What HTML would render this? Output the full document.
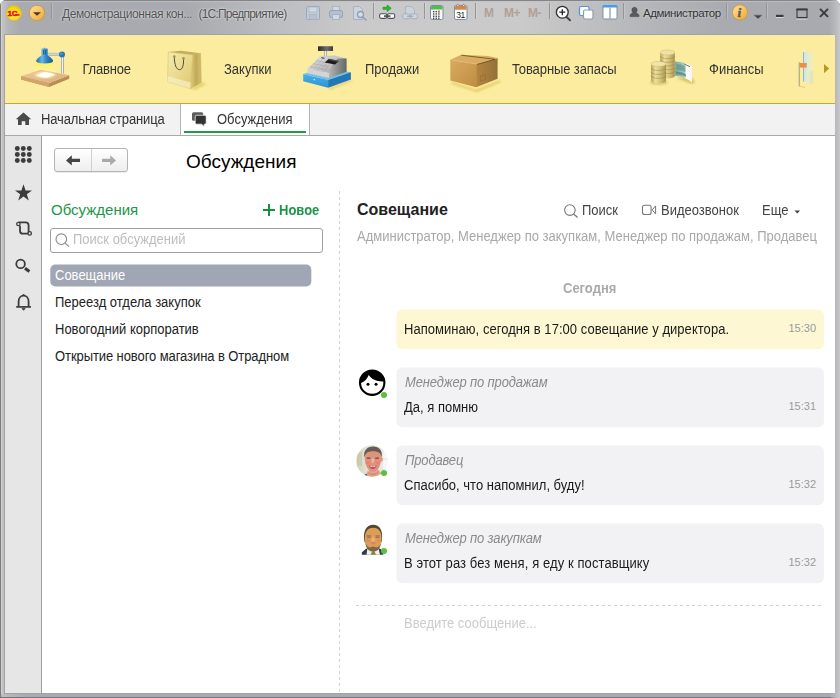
<!DOCTYPE html>
<html lang="ru">
<head>
<meta charset="utf-8">
<title>Обсуждения</title>
<style>
*{box-sizing:border-box;margin:0;padding:0}
html,body{width:840px;height:698px;overflow:hidden;background:#fff}
body{font-family:"Liberation Sans",Arial,sans-serif;font-size:13px;color:#222;position:relative}
.abs{position:absolute}
#win{position:absolute;left:0;top:0;width:840px;height:698px;border-radius:6px 6px 0 0;overflow:hidden;
 background:linear-gradient(90deg,#a9abb0 0,#a8aaaf 22%,#bcbdc0 33%,#c9c9ca 42%,#cacaca 62%,#b6b7ba 76%,#a9abb0 86%,#a8aaaf 100%)}
#win:before{content:"";position:absolute;left:0;top:0;width:22px;height:698px;background:linear-gradient(90deg,#c4c4c4 0,#c0c0c0 4px,rgba(184,185,188,.7) 8px,rgba(169,171,176,0) 20px)}
#win:after{content:"";position:absolute;right:0;top:0;width:12px;height:698px;background:linear-gradient(270deg,#c8c8c8 0,#bcbdc0 3px,rgba(169,171,176,0) 11px)}
.fr{position:absolute;background:#7c7c7e}
#titletxt,#titletxt2{left:62px;top:6px;font-size:12px;letter-spacing:-.43px;color:#505050;white-space:nowrap;line-height:16px;text-shadow:0 0 3px rgba(255,255,255,.75),0 0 1px rgba(255,255,255,.5)}
#titletxt2{left:198.5px;letter-spacing:-.8px}
#sections{left:5px;top:35px;width:830px;height:68px;background:#fcec9f}
#secline{left:5px;top:103px;width:830px;height:1px;background:#c9aa22}
.sec{position:absolute;top:27px;font-size:13px;color:#333;white-space:nowrap;line-height:16px}
#tabs{left:5px;top:104px;width:830px;height:31px;background:#f2f2f2}
#tabs2{left:5px;top:104px;width:830px;height:31px}
#tabline{left:5px;top:135px;width:830px;height:1px;background:#a9a9a9}
.tab{position:absolute;z-index:2;top:8px;font-size:13px;color:#333;white-space:nowrap;line-height:16px}
#tools{left:5px;top:136px;width:36px;height:557px;background:#e6e6e6}
#toolline{left:41px;top:136px;width:1px;height:557px;background:#a0a0a0}
#main{left:42px;top:136px;width:793px;height:557px;background:#fff}

#main .t{position:absolute;white-space:nowrap;line-height:16px}
#nav{left:54px;top:148px;width:74px;height:24px;border:1px solid #b4b4b4;border-radius:3px;background:linear-gradient(#fff,#eee);box-shadow:0 1px 0 rgba(0,0,0,.08)}
#nav i{position:absolute;left:36px;top:0;width:1px;height:22px;background:#cfcfcf}
#ptitle{left:186px;top:151px;font-size:19px;line-height:22px;color:#000;white-space:nowrap}
#ltitle{left:51px;top:201px;font-size:15px;line-height:18px;color:#1d9549;white-space:nowrap}
#lnew{left:279px;top:203px;font-size:13px;line-height:16px;font-weight:bold;color:#1d9549;white-space:nowrap}
#search{left:50px;top:228px;width:273px;height:25px;border:1px solid #a0a0a0;border-radius:3px;background:#fff}
#search span{position:absolute;left:22px;top:3px;font-size:13px;line-height:16px;color:#bdbdbd;white-space:nowrap}
.row{position:absolute;left:55px;font-size:13px;line-height:16px;color:#222;white-space:nowrap}
#sel{left:50px;top:264px;width:261px;height:22px;border-radius:5px;background:#a0a6b3;transform:translate(.3px,.5px)}
#vdash{left:339px;top:191px;width:1px;height:502px;background:repeating-linear-gradient(180deg,#d2d2d2 0,#d2d2d2 3px,transparent 3px,transparent 6px)}
#ctitle{left:357px;top:201px;font-size:16px;line-height:18px;font-weight:bold;color:#222;white-space:nowrap}
.hb{position:absolute;top:203px;font-size:13px;line-height:16px;color:#444;white-space:nowrap}
#parts{left:357px;top:229px;font-size:13px;line-height:16px;color:#a8a8a8;white-space:nowrap}
#today{left:563px;top:281px;font-size:13px;line-height:16px;font-weight:bold;color:#aaa;white-space:nowrap}
.bub{position:absolute;left:396px;width:428px}
.bub .au{position:absolute;left:9px;top:8px;font-size:13px;line-height:16px;font-style:italic;color:#8a8a8a;white-space:nowrap;letter-spacing:-.16px}
.bub .tx{position:absolute;left:8px;font-size:13px;line-height:16px;color:#1a1a1a;white-space:nowrap}
.bub .tm{position:absolute;right:8px;font-size:11px;line-height:14px;color:#9a9a9a;white-space:nowrap}
#hdash{left:356px;top:605px;width:465px;height:1px;background:repeating-linear-gradient(90deg,#d0d0d0 0,#d0d0d0 3px,transparent 3px,transparent 6px)}
#inp{left:404px;top:616px;font-size:13px;line-height:16px;color:#ccc;white-space:nowrap}
.av{position:absolute;width:27px;height:27px;border-radius:50%;overflow:hidden}
.dot{position:absolute;width:7px;height:7px;border-radius:50%;background:#5cc04a;border:1px solid #fff}

.tsep{position:absolute;top:3px;width:2px;height:16px;border-left:1px solid #93959b;border-right:1px solid rgba(255,255,255,.18)}
.ti{position:absolute;overflow:visible}
.mm{position:absolute;top:5px;font-size:12px;line-height:16px;font-weight:bold;color:#b3a094;letter-spacing:-.5px;white-space:nowrap}
#admin{left:643px;top:5px;font-size:11.5px;letter-spacing:-.4px;color:#333;white-space:nowrap;line-height:16px;text-shadow:0 0 3px rgba(255,255,255,.6)}

#atab{left:181px;top:104px;width:128px;height:31px;background:#fff}
.tabsep{position:absolute;top:104px;width:1px;height:31px;background:#b4b4b4}
#tabul{left:184px;top:131px;width:122px;height:2px;background:#1d9b48}
.sec,.tab,.row,.hb,#parts,#today,.bub .au,.bub .tx,#inp,#search span,#lnew{transform:scaleY(1.07);transform-origin:0 12.5px}
.row{transform:translateY(.5px) scaleY(1.07)}
</style>
</head>
<body>
<div id="win">
<div class="fr" style="left:0;top:0;width:1px;height:698px"></div>
<div class="fr" style="left:839px;top:0;width:1px;height:698px;background:#727274"></div>
<div class="fr" style="left:0;top:0;width:840px;height:1px;background:#848486"></div>
<div class="fr" style="left:1px;top:1px;width:838px;height:1px;background:#c2c3c6;opacity:.8"></div>
<div class="fr" style="left:1px;top:1px;width:1px;height:696px;background:#d0d0d0"></div>
<div class="fr" style="left:838px;top:1px;width:1px;height:696px;background:#d0d0d0"></div>
<div class="fr" style="left:1px;top:694px;width:838px;height:3px;background:linear-gradient(90deg,#bcbcbe 0,#a9abb0 3%,#a9abb0 100%)"></div>
<div class="fr" style="left:0;top:697px;width:840px;height:1px;background:#77777a"></div>
<div class="fr" style="left:4px;top:34px;width:832px;height:660px;background:#a0a2a9"></div>
</div>
<div id="titletxt" class="abs">Демонстрационная кон...</div>
<div id="titletxt2" class="abs">(1С:Предприятие)</div>

<svg class="ti" style="left:0;top:0" width="840" height="35" viewBox="0 0 840 35">
<defs>
<radialGradient id="g1c" cx=".45" cy=".6" r=".6"><stop offset="0" stop-color="#fff24a"/><stop offset=".7" stop-color="#fbd914"/><stop offset="1" stop-color="#e9bd10"/></radialGradient>
<linearGradient id="gor" x1="0" y1="0" x2="1" y2="1"><stop offset="0" stop-color="#fde0a0"/><stop offset=".5" stop-color="#f9c468"/><stop offset="1" stop-color="#f1a436"/></linearGradient>
</defs>
<circle cx="14" cy="13" r="7.6" fill="url(#g1c)" stroke="#d9b83a" stroke-width=".6"/>
<text x="7.6" y="15.7" font-family="Liberation Sans,Arial,sans-serif" font-weight="bold" font-size="8" fill="#e0101a" stroke="#e0101a" stroke-width=".5" letter-spacing="-.3">1С</text>
<path d="M14.600 14.900h5" stroke="#e0101a" stroke-width="1.500"/>
<circle cx="37" cy="13" r="7.7" fill="url(#gor)" stroke="#c9993f" stroke-width=".9"/>
<path d="M33 12.2h8l-4 3.6z" fill="#4a3a22"/>
</svg>

<svg class="ti" style="left:300px;top:0" width="130" height="35" viewBox="300 0 130 35">
<!-- save (disabled) -->
<g opacity=".9">
<rect x="306.5" y="6.5" width="13" height="13" rx="1" fill="#c3ccd8" stroke="#93a7c0"/>
<rect x="309" y="7" width="8" height="5" fill="#d5dbe3" stroke="#9db0c6" stroke-width=".6"/>
<rect x="309.5" y="14.5" width="7" height="5" fill="#b7c3cf" stroke="#9db0c6" stroke-width=".6"/>
</g>
<!-- print (disabled) -->
<g opacity=".92">
<rect x="332.5" y="6.500" width="7" height="5" fill="#d4dae2" stroke="#9badc3" stroke-width=".8"/>
<rect x="329.500" y="10.500" width="13" height="7" rx="1.500" fill="#b4bfcd" stroke="#8fa2ba"/>
<rect x="332.500" y="14.500" width="7" height="5" fill="#d4dae2" stroke="#9badc3" stroke-width=".8"/>
</g>
<!-- preview (disabled) -->
<g opacity=".92">
<path d="M353.500 6.500h6l3 3v10h-9z" fill="#cdd5de" stroke="#9badc3" stroke-width=".9"/>
<circle cx="360.500" cy="14.500" r="3" fill="#d9dfe6" stroke="#8a9db5" stroke-width="1.300"/>
<path d="M363 17l3 3" stroke="#8a9db5" stroke-width="1.600" stroke-linecap="round"/>
</g>
<!-- link with green arrow -->
<path d="M383 7.300h4.200v-2.300l4 3.300-4 3.300v-2.300h-4.200z" fill="#22c322" stroke="#168a16" stroke-width=".6"/>
<rect x="379.600" y="13.800" width="7.300" height="4.600" rx="1.600" fill="#fff" stroke="#4a4f58" stroke-width="1.100"/>
<rect x="387.400" y="13.800" width="7.300" height="4.600" rx="1.600" fill="#fff" stroke="#4a4f58" stroke-width="1.100"/>
<rect x="384" y="15.300" width="6.500" height="1.600" fill="#4a4f58"/>
<!-- disabled link/doc -->
<g opacity=".75">
<path d="M405.500 6.500h6l3 3v6h-9z" fill="#cfd6df" stroke="#9badc3" stroke-width=".9"/>
<rect x="402.800" y="13.800" width="7" height="5" rx="1.600" fill="#d4dae2" stroke="#95a7be" stroke-width="1"/>
<rect x="410.400" y="13.800" width="7" height="5" rx="1.600" fill="#d4dae2" stroke="#95a7be" stroke-width="1"/>
<rect x="407" y="15.500" width="6.500" height="1.500" fill="#95a7be"/>
</g>
</svg>
<svg class="ti" style="left:426px;top:0" width="50" height="35" viewBox="426 0 50 35">
<!-- calculator -->
<rect x="430.500" y="5.500" width="12.500" height="14" rx="1.500" fill="#f4f6f8" stroke="#7f8fa3"/>
<path d="M431 7.200q0-1.200 1.200-1.200h9.100q1.200 0 1.200 1.200v2.300h-11.500z" fill="#4cc04c"/>
<g fill="#333"><rect x="433" y="11" width="1.300" height="1.300"/><rect x="435.600" y="11" width="1.300" height="1.300"/><rect x="433" y="13.300" width="1.300" height="1.300"/><rect x="435.600" y="13.300" width="1.300" height="1.300"/><rect x="438.200" y="13.300" width="1.300" height="1.300"/><rect x="433" y="15.600" width="1.300" height="1.300"/><rect x="435.600" y="15.600" width="1.300" height="1.300"/><rect x="438.200" y="15.600" width="1.300" height="1.300"/><rect x="433" y="17.600" width="1.300" height="1.300"/><rect x="435.600" y="17.600" width="1.300" height="1.300"/><rect x="438.200" y="17.600" width="1.300" height="1.300"/></g>
<rect x="438.200" y="10.600" width="1.400" height="2" fill="#e02020"/>
<!-- calendar -->
<rect x="454.500" y="5.500" width="12.500" height="14" rx="1.500" fill="#fff" stroke="#7f8fa3"/>
<path d="M455 7.200q0-1.200 1.200-1.200h9.100q1.200 0 1.200 1.200v2.600h-11.500z" fill="#cf8a55"/>
<rect x="457" y="4.300" width="1.300" height="2.600" fill="#fff" stroke="#b07040" stroke-width=".4"/><rect x="463" y="4.300" width="1.300" height="2.600" fill="#fff" stroke="#b07040" stroke-width=".4"/>
<text x="456.200" y="18" font-family="Liberation Sans,Arial,sans-serif" font-size="8.500" fill="#222" letter-spacing="-.5">31</text>
</svg>
<svg class="ti" style="left:552px;top:0" width="90" height="35" viewBox="552 0 90 35">
<!-- zoom -->
<path d="M566 16.500l4 3.800" stroke="#444" stroke-width="2" stroke-linecap="round"/>
<circle cx="562.300" cy="12.200" r="5.900" fill="#fff" stroke="#2e2e2e" stroke-width="1.300"/>
<path d="M559.300 12.200h6M562.300 9.200v6" stroke="#222" stroke-width="1.300"/>
<!-- windows -->
<rect x="579.500" y="6.500" width="9.500" height="9" rx="1.500" fill="#fff" stroke="#4d95dd" stroke-width="1.200"/>
<rect x="583.500" y="10" width="9.500" height="9" rx="1.500" fill="#fff" stroke="#8c9bb0" stroke-width="1.200"/>
<!-- panels -->
<rect x="603" y="5.500" width="14" height="13.500" rx="1.200" fill="#fff" stroke="#7f8fa8" stroke-width="1"/>
<path d="M602.500 7q0-2 2-2h11q2 0 2 2v.6h-15z" fill="#4d9be8"/>
<path d="M610 7.600v11" stroke="#6f7f98" stroke-width="1"/>
<!-- user -->
<path d="M634.500 7.300c1.700 0 2.600 1.200 2.600 2.700 0 1-.4 1.900-1 2.500.2.800 2.900 1.300 2.900 3.100v1h-9v-1c0-1.800 2.700-2.300 2.900-3.100-.6-.6-1-1.500-1-2.500 0-1.500.9-2.700 2.600-2.700z" fill="#5a5a5a" stroke="#3c3c3c" stroke-width=".5"/>
</svg>
<svg class="ti" style="left:728px;top:0" width="110" height="35" viewBox="728 0 110 35">
<circle cx="740" cy="12.400" r="7.600" fill="url(#gor)" stroke="#c9993f" stroke-width=".9"/>
<text x="737.600" y="17" font-family="Liberation Serif,serif" font-style="italic" font-weight="bold" font-size="13.5" fill="#5a5a5a" stroke="#5a5a5a" stroke-width=".4">i</text>
<path d="M754 15.200h8l-4 3.600z" fill="#444"/>
<path d="M754 15.200h8" stroke="#666" stroke-width=".6"/>
<rect x="776" y="17" width="7.500" height="1" fill="#d8d8d8"/>
<rect x="776" y="14.800" width="7.500" height="2.200" fill="#3a3a3a"/>
<rect x="796.500" y="19" width="11" height="1" fill="#d0d0d0" opacity=".7"/>
<rect x="797" y="9.500" width="10" height="8" fill="none" stroke="#3a3a3a" stroke-width="1.100"/>
<rect x="796.500" y="8.400" width="11" height="2" fill="#3a3a3a"/>
<path d="M820 8.800l8 8M828 8.800l-8 8" stroke="#3a3a3a" stroke-width="1.900"/>
</svg>
<div class="tsep" style="left:51px"></div>
<div class="tsep" style="left:373px"></div>
<div class="tsep" style="left:424px"></div>
<div class="tsep" style="left:475px"></div>
<div class="tsep" style="left:549px"></div>
<div class="tsep" style="left:623px"></div>
<div class="tsep" style="left:726px"></div>
<div class="tsep" style="left:766px"></div>
<div class="mm" style="left:484px">M</div>
<div class="mm" style="left:504px">M+</div>
<div class="mm" style="left:528px">M-</div>
<div id="admin" class="abs">Администратор</div>
<div id="sections" class="abs">
 <div class="sec" style="left:77.500px;letter-spacing:-.2px">Главное</div>
 <div class="sec" style="left:219px">Закупки</div>
 <div class="sec" style="left:360px">Продажи</div>
 <div class="sec" style="left:507px;letter-spacing:-.1px">Товарные запасы</div>
 <div class="sec" style="left:704px">Финансы</div>
</div>

<svg class="ti" style="left:5px;top:35px" width="830" height="68" viewBox="5 35 830 68">
<defs>
<linearGradient id="lsh" x1="0" y1="0" x2="1" y2="0"><stop offset="0" stop-color="#1d6aa8"/><stop offset=".35" stop-color="#6bb6e6"/><stop offset=".6" stop-color="#2f86c4"/><stop offset="1" stop-color="#165a94"/></linearGradient>
<linearGradient id="lglow" x1="0" y1="0" x2="0" y2="1"><stop offset="0" stop-color="#fff25a"/><stop offset="1" stop-color="#fff7a8" stop-opacity=".55"/></linearGradient>
<linearGradient id="lpole" x1="0" y1="0" x2="1" y2="0"><stop offset="0" stop-color="#8c8c8c"/><stop offset=".45" stop-color="#f2f2f2"/><stop offset="1" stop-color="#8a8a8a"/></linearGradient>
<linearGradient id="larm" x1="0" y1="0" x2="0" y2="1"><stop offset="0" stop-color="#9a9a9a"/><stop offset=".45" stop-color="#f0f0f0"/><stop offset="1" stop-color="#8a8a8a"/></linearGradient>
<linearGradient id="ldesk" x1="0" y1="0" x2="1" y2="1"><stop offset="0" stop-color="#efc9a0"/><stop offset="1" stop-color="#d8ae74"/></linearGradient>
<radialGradient id="lspot" cx=".5" cy=".5" r=".5"><stop offset="0" stop-color="#fffbe0"/><stop offset=".6" stop-color="#fbeeb0" stop-opacity=".8"/><stop offset="1" stop-color="#f0d090" stop-opacity="0"/></radialGradient>
<linearGradient id="bagf" x1="0" y1="0" x2="1" y2="1"><stop offset="0" stop-color="#f6eab0"/><stop offset=".6" stop-color="#e8d688"/><stop offset="1" stop-color="#dcc670"/></linearGradient>
<linearGradient id="bags" x1="0" y1="0" x2="1" y2="0"><stop offset="0" stop-color="#e2d088"/><stop offset=".45" stop-color="#c4ad5a"/><stop offset="1" stop-color="#d2bd70"/></linearGradient>
<linearGradient id="regb" x1="0" y1="0" x2="0" y2="1"><stop offset="0" stop-color="#49b2e8"/><stop offset="1" stop-color="#2a93d6"/></linearGradient>
<linearGradient id="regk" x1="0" y1="0" x2="1" y2="1"><stop offset="0" stop-color="#e8e8e8"/><stop offset="1" stop-color="#a8a8a8"/></linearGradient>
<linearGradient id="regs" x1="0" y1="0" x2="1" y2="0"><stop offset="0" stop-color="#b4b4b4"/><stop offset="1" stop-color="#666"/></linearGradient>
<linearGradient id="regd" x1="0" y1="0" x2="1" y2="0"><stop offset="0" stop-color="#2a2a2a"/><stop offset=".6" stop-color="#707070"/><stop offset="1" stop-color="#3a3a3a"/></linearGradient>
<linearGradient id="boxf" x1="0" y1="0" x2="1" y2="1"><stop offset="0" stop-color="#d7ab60"/><stop offset="1" stop-color="#c08d42"/></linearGradient>
<linearGradient id="boxr" x1="0" y1="0" x2="1" y2="0"><stop offset="0" stop-color="#b5853f"/><stop offset="1" stop-color="#94703a"/></linearGradient>
<linearGradient id="coin" x1="0" y1="0" x2="1" y2="0"><stop offset="0" stop-color="#b8a458"/><stop offset=".3" stop-color="#ebdfa2"/><stop offset=".7" stop-color="#cdbb72"/><stop offset="1" stop-color="#a8944e"/></linearGradient>
<linearGradient id="note" x1="0" y1="0" x2="1" y2="0"><stop offset="0" stop-color="#7fa9a0"/><stop offset=".55" stop-color="#a9cdbf"/><stop offset=".66" stop-color="#ffffff"/><stop offset="1" stop-color="#f4f4f4"/></linearGradient>
<linearGradient id="docf" x1="0" y1="0" x2="1" y2="0"><stop offset="0" stop-color="#5d9fd0"/><stop offset=".12" stop-color="#cfe6e4"/><stop offset=".6" stop-color="#e0efd8" stop-opacity=".8"/><stop offset="1" stop-color="#f4ecb0" stop-opacity="0"/></linearGradient>
<linearGradient id="docg" x1="0" y1="0" x2="1" y2="0"><stop offset="0" stop-color="#f4ecc8"/><stop offset=".7" stop-color="#d4e2b8" stop-opacity=".7"/><stop offset="1" stop-color="#f4ecb0" stop-opacity="0"/></linearGradient>
<filter id="blur1"><feGaussianBlur stdDeviation="1.2"/></filter>
</defs>
<!-- lamp -->
<g>
<path d="M36 62.800h16.800l3.500 9.500h-23.700z" fill="url(#lglow)"/>
<path d="M21.200 76.100l28 7 20-7.800v3.400l-20 8.200-28-7.300z" fill="#b98c58"/>
<path d="M21.200 76.100l27.800 6.900v3.900l-27.800-7.300z" fill="#d2a46c"/>
<path d="M21.200 76.100l19.600-6.400 28.400 5.600-20.200 7.700z" fill="url(#ldesk)"/>
<ellipse cx="45" cy="75" rx="13" ry="4.500" fill="url(#lspot)"/>
<path d="M36 75.700l8.200-3.900 11.200 2.600-8.600 3.400z" fill="#fff"/>
<rect x="61.300" y="56" width="2.700" height="17.600" fill="url(#lpole)"/>
<rect x="47" y="52.900" width="14" height="2.600" fill="url(#larm)"/>
<circle cx="62" cy="54.600" r="3" fill="#2878b4"/><circle cx="61.300" cy="53.800" r="1.300" fill="#5aa6dc" opacity=".7"/>
<path d="M44.300 47.200l.8 1.200h2q.6 0 .6.600v6.400q4.600 2.600 5.400 5.400 0 2.600-8.500 2.600t-8.500-2.600q.8-2.800 5.400-5.400v-6.400q0-.6.600-.6h1.600z" fill="url(#lsh)"/>
<path d="M43.600 50v4.500M45.400 50v4.500" stroke="#124c80" stroke-width=".8"/>
</g>
<!-- bag -->
<g>
<path d="M190 88.500l11.500-6 5.500 1.500-12 6z" fill="#c9b040" opacity=".45" filter="url(#blur1)"/>
<path d="M168.300 52l12.500-1.200 19.800 2.500-7.800 1.700z" fill="#c4ae5a"/>
<path d="M192.800 55l7.800-1.700.8 29.300-11.100 6z" fill="url(#bags)" stroke="#c4ad58" stroke-width=".4"/>
<path d="M196.500 54.200l.6 30.600" stroke="#bda650" stroke-width=".6"/>
<path d="M168.300 52l24.500 3-2.500 33.600-22.800-6.900z" fill="url(#bagf)" stroke="#d2bd6a" stroke-width=".5"/>
<path d="M167.600 76.200l23.100 6.400-.4 6-22.800-6.900z" fill="#f7efc4" opacity=".75"/>
<path d="M174.300 57c.2 8 2 12.600 5.300 12.700 3 .1 4.200-5 3.900-11" fill="none" stroke="#3c3a2c" stroke-width=".9"/>
<circle cx="174.300" cy="56.600" r="1.300" fill="#a8983c"/><circle cx="183.500" cy="58.400" r="1.300" fill="#a8983c"/>
</g>
<!-- register -->
<g>
<path d="M328 88l23-8.500 2 1.500-23 9z" fill="#c9b040" opacity=".4" filter="url(#blur1)"/>
<rect x="318" y="46.200" width="15" height="4.900" rx=".4" fill="url(#regd)"/>
<rect x="324.300" y="51" width="2.700" height="5" fill="url(#lpole)"/>
<path d="M303.200 74l20-6 27.700 4.200-22.800 7.800z" fill="#6cc2ee"/>
<path d="M303.200 74l24.900 6v7.700l-24.900-6.400z" fill="url(#regb)"/>
<path d="M328.100 80l22.800-7.800v7.400l-22.800 8.100z" fill="#2277b6"/>
<circle cx="314.300" cy="79.600" r=".8" fill="#d8e8f0"/>
<path d="M320 56l15-.6 11.600 3.100-9 2z" fill="#c8c8c8"/>
<path d="M329 78v-5.500c1.400-6.500 4.400-11.100 8.600-13.900l9-.1v13.300z" fill="url(#regs)"/>
<path d="M307.500 68.700l21.500 3.800v5.500l-21.500-4.800z" fill="#d4d4d4"/>
<path d="M307.500 68.700l12.500-12.700 17.600 2.600c-4.200 2.800-7.200 7.400-8.600 13.900z" fill="url(#regk)"/>
<path d="M311 67.500l8-8.500M314.500 68.200l7.500-8.700M318 68.900l6.500-8M321.500 69.500l5-6M325 70.200l3-3.500M313.500 63.800l14 2.600M316.500 60.800l9 1.700M310.500 66.800l16 3" stroke="#9a9a9a" stroke-width=".5" opacity=".8"/>
<path d="M324.700 62.500l4.300-3.800 9.900 2.300-3.900 3.500z" fill="#1c1c1c"/>
<path d="M329 58.700l9.900 2.300-1.200 1.100-9.600-2.400z" fill="#555"/>
<rect x="321.300" y="57.400" width="3.200" height=".9" fill="#333" transform="rotate(8 322 58)"/>
</g>
<!-- box -->
<g>
<path d="M452 82l24 7.500 23-9 2 1.500-24 10-26-8z" fill="#c9ac38" opacity=".5" filter="url(#blur1)"/>
<path d="M450.300 59.800l10.800-5 27.100 1.100 9.400 2.200-21.500 6z" fill="#d9ae62"/>
<path d="M450.300 59.800l25.800 4.300v23.200l-25.800-6.900z" fill="url(#boxf)"/>
<path d="M476.100 64.100l21.500-6v20.600l-21.500 8.600z" fill="url(#boxr)"/>
<path d="M450.300 59.800l25.800 4.300 21.500-6" fill="none" stroke="#e6c486" stroke-width=".6" opacity=".8"/>
<path d="M480.300 76.400l5.200-1.700v4.600l-5.200 1.800z" fill="none" stroke="#8a6430" stroke-width=".5"/>
<path d="M461.300 55.200l33.700 4.100-17.800 5.100" fill="none" stroke="#5e401a" stroke-width=".9" opacity=".8"/>
</g>
<!-- coins + note -->
<g>
<path d="M676 78l16 6 3-1.500-4-6z" fill="#b09828" opacity=".5" filter="url(#blur1)"/>
<ellipse cx="659" cy="82.500" rx="9" ry="2.500" fill="#b09828" opacity=".4" filter="url(#blur1)"/>
<path d="M674.800 61.500c7 .2 13 2 17.200 5.200v15.900c-4.200-4-10-6.300-17.200-6.900z" fill="url(#note)"/>
<path d="M676.500 64c3.500.3 6.500 1 9 2.200v6c-2.500-1.300-5.500-2-9-2.300z" fill="#4f8c86" opacity=".55"/>
<path d="M676 71.500c3.800.3 7 1.100 10 2.600v2.800c-3-1.600-6.200-2.400-10-2.800z" fill="#3c7a74" opacity=".6"/>
<path d="M684.500 64.200l5.500 2.500" stroke="#333" stroke-width=".7"/>
<path d="M660.200 52.500v23.400a7.300 2.500 0 0 0 14.600 0v-23.400z" fill="url(#coin)"/>
<g fill="none" stroke="#85722f" stroke-width=".6" opacity=".65"><path d="M660.200 56.200a7.300 2.500 0 0 0 14.600 0M660.200 59.900a7.300 2.500 0 0 0 14.600 0M660.200 63.600a7.300 2.500 0 0 0 14.600 0M660.200 67.300a7.300 2.500 0 0 0 14.600 0M660.200 71a7.300 2.500 0 0 0 14.600 0"/></g>
<ellipse cx="667.500" cy="52.500" rx="7.300" ry="2.500" fill="#eee2a6" stroke="#cbb970" stroke-width=".5"/>
<path d="M651 64v16.900a7.500 2.600 0 0 0 15 0v-16.900z" fill="url(#coin)"/>
<g fill="none" stroke="#85722f" stroke-width=".6" opacity=".65"><path d="M651 67.900a7.500 2.600 0 0 0 15 0M651 71.800a7.500 2.600 0 0 0 15 0M651 75.700a7.500 2.600 0 0 0 15 0"/></g>
<ellipse cx="658.500" cy="64" rx="7.500" ry="2.600" fill="#f0e4a8" stroke="#cbb970" stroke-width=".5"/>
</g>
<!-- partial doc icon -->
<g>
<path d="M803 52.200l11.500-1.500v32l-11.500-1.200z" fill="url(#docf)"/>
<path d="M807.300 71.200l7-.5v13l-7-.5z" fill="url(#docg)"/>
<rect x="798.700" y="62.200" width="1" height="24" fill="#9a9a8a"/>
<rect x="799.700" y="63" width="7" height="4.600" fill="#f08c44"/>
<path d="M799 86l6 1.600" stroke="#c8b868" stroke-width=".8" opacity=".7"/>
</g>
<path d="M824 64l5.200 4.600-5.200 4.600z" fill="#b79a1a"/>
</svg>
<div id="secline" class="abs"></div>
<div id="tabs" class="abs"></div>
<div id="atab" class="abs"></div>
<div id="tabs2" class="abs">
 <div class="tab" style="left:36px;letter-spacing:-.12px">Начальная страница</div>
 <div class="tab" style="left:212px">Обсуждения</div>
</div>
<div class="tabsep" style="left:180px"></div><div class="tabsep" style="left:309px"></div>
<div id="tabul" class="abs"></div>
<svg class="ti" style="left:5px;top:104px" width="320" height="31" viewBox="5 104 320 31">
<path d="M23.500 112.600l7.700 6.700h-2.200v5.700h-3.700v-3.700h-3.600v3.700h-3.700v-5.700h-2.200z" fill="#4a4a4a"/>
<rect x="192" y="112.200" width="11.200" height="8.600" rx="1.600" fill="#5e5e5e"/>
<path d="M196.700 115.300h8q1.500 0 1.500 1.500v5.900q0 1.500-1.500 1.500h-.6l.4 2.600-3-2.600h-4.800q-1.500 0-1.500-1.500v-5.900q0-1.500 1.500-1.500z" fill="#333" stroke="#fff" stroke-width=".7"/>
</svg>
<div id="tabline" class="abs"></div>
<div id="tools" class="abs"></div>
<div id="toolline" class="abs"></div>
<div id="main" class="abs"></div>
<div id="nav" class="abs"><i></i></div>

<svg class="ti" style="left:5px;top:136px" width="130" height="200" viewBox="5 136 130 200">
<g fill="#3c3c3c">
<circle cx="17.300" cy="148.500" r="2.450"/><circle cx="23.300" cy="148.500" r="2.450"/><circle cx="29.300" cy="148.500" r="2.450"/>
<circle cx="17.300" cy="154.500" r="2.450"/><circle cx="23.300" cy="154.500" r="2.450"/><circle cx="29.300" cy="154.500" r="2.450"/>
<circle cx="17.300" cy="160.500" r="2.450"/><circle cx="23.300" cy="160.500" r="2.450"/><circle cx="29.300" cy="160.500" r="2.450"/>
<path d="M23.500 184.200l2.100 6.200h6.400l-5.200 3.800 2 6.200-5.300-3.900-5.300 3.900 2-6.200-5.200-3.800h6.400z"/>
</g>
<g fill="none" stroke="#3c3c3c" stroke-width="1.800">
<path d="M18.600 222.300h7q3 0 3 3v8"/>
<path d="M29.400 233.700h-6.600q-2.800 0-2.800-3v-5"/>
<circle cx="18.400" cy="224" r="1.700" fill="#e6e6e6" stroke-width="1.300"/>
<circle cx="29.700" cy="233.400" r="1.700" fill="#e6e6e6" stroke-width="1.300"/>
<circle cx="20.600" cy="263.900" r="4.300"/>
<path d="M25 268.200l4.400 3.300" stroke-width="3.200"/>
<path d="M18.600 306.500v-4.800c0-3.600 2.200-6 5-6s5 2.400 5 6v4.800" />
<path d="M16.200 306.900h14.800" stroke-width="1.700"/>
</g>
<path d="M22 308.400h3.200l-1.600 1.900z" fill="#3c3c3c" stroke="#3c3c3c" stroke-width=".8"/>
<circle cx="23.600" cy="294.900" r="1" fill="#3c3c3c"/>
<!-- nav arrows -->
<path d="M66 160.400l5.800-5.200v3.600h8.200v3.200h-8.200v3.600z" fill="#444"/>
<path d="M116 160.400l-5.800-5.200v3.600h-8.200v3.200h8.200v3.600z" fill="#aaa"/>
</svg>
<div id="ptitle" class="abs">Обсуждения</div>
<div id="ltitle" class="abs">Обсуждения</div>
<div id="lnew" class="abs">Новое</div>
<div id="search" class="abs"><span>Поиск обсуждений</span></div>
<div id="sel" class="abs"></div>
<div class="row" style="top:268px;color:#fff">Совещание</div>
<div class="row" style="top:295px">Переезд отдела закупок</div>
<div class="row" style="top:322px">Новогодний корпоратив</div>
<div class="row" style="top:349px;letter-spacing:-.085px">Открытие нового магазина в Отрадном</div>
<div id="vdash" class="abs"></div>
<div id="ctitle" class="abs">Совещание</div>
<div class="hb" style="left:582px">Поиск</div>
<div class="hb" style="left:661px">Видеозвонок</div>
<div class="hb" style="left:762px">Еще</div>
<div id="parts" class="abs">Администратор, Менеджер по закупкам, Менеджер по продажам, Продавец</div>
<div id="today" class="abs">Сегодня</div>
<svg class="ti" style="left:390px;top:300px" width="440" height="290" viewBox="390 300 440 290">
<rect x="396.400" y="309.400" width="427.500" height="39.800" rx="6" fill="#fdf7d4"/>
<rect x="396.400" y="367.400" width="427.500" height="59.900" rx="6" fill="#f2f2f4"/>
<rect x="396.400" y="445.400" width="427.500" height="59.900" rx="6" fill="#f2f2f4"/>
<rect x="396.400" y="523.400" width="427.500" height="59.900" rx="6" fill="#f2f2f4"/>
</svg>
<div class="bub" style="top:309px;height:40px"><span class="tx" style="top:13px;letter-spacing:.04px">Напоминаю, сегодня в 17:00 совещание у директора.</span><span class="tm" style="top:12px">15:30</span></div>
<div class="bub" style="top:367px;height:60px"><span class="au">Менеджер по продажам</span><span class="tx" style="top:33px">Да, я помню</span><span class="tm" style="top:32px">15:31</span></div>
<div class="bub" style="top:445px;height:60px"><span class="au">Продавец</span><span class="tx" style="top:33px">Спасибо, что напомнил, буду!</span><span class="tm" style="top:32px">15:32</span></div>
<div class="bub" style="top:523px;height:60px"><span class="au">Менеджер по закупкам</span><span class="tx" style="top:33px;letter-spacing:.09px">В этот раз без меня, я еду к поставщику</span><span class="tm" style="top:32px">15:32</span></div>

<svg class="ti" style="left:255px;top:195px" width="560" height="30" viewBox="255 195 560 30">
<path d="M263 210h12M269 204v12" stroke="#12923f" stroke-width="2"/>
<circle cx="569.900" cy="210.100" r="5.300" fill="none" stroke="#787878" stroke-width="1.100"/>
<path d="M573.700 214l3.900 3.500" stroke="#787878" stroke-width="1.200"/>
<rect x="642.500" y="205.300" width="8.600" height="9.200" rx="2" fill="none" stroke="#787878" stroke-width="1.100"/>
<path d="M652.200 209.900l3.400-4v8z" fill="none" stroke="#787878" stroke-width="1" stroke-linejoin="round"/>
<path d="M794.500 210.500h5.600l-2.800 2.900z" fill="#444"/>
</svg>
<svg class="ti" style="left:52px;top:230px" width="22" height="22" viewBox="52 230 22 22">
<circle cx="61.300" cy="239.200" r="5.300" fill="none" stroke="#8a8a8a" stroke-width="1.100"/>
<path d="M65.100 243.100l3.900 3.500" stroke="#8a8a8a" stroke-width="1.200"/>
</svg>
<svg class="ti" style="left:352px;top:362px" width="40" height="200" viewBox="352 362 40 200">
<defs>
<clipPath id="av1"><circle cx="372.200" cy="382.700" r="12.200"/></clipPath>
<clipPath id="av2"><circle cx="372" cy="461" r="15.700"/></clipPath>
<linearGradient id="av2bg" x1="0" y1="0" x2="1" y2="0"><stop offset="0" stop-color="#cfcfb4"/><stop offset=".35" stop-color="#e2e4d6"/><stop offset=".7" stop-color="#dfe6e0"/><stop offset="1" stop-color="#f2f4f2"/></linearGradient>
<filter id="bl"><feGaussianBlur stdDeviation=".7"/></filter>
<filter id="bl2"><feGaussianBlur stdDeviation=".5"/></filter>
</defs>
<!-- avatar 1 -->
<circle cx="372.200" cy="382.700" r="12.200" fill="#fff"/>
<g clip-path="url(#av1)">
<path d="M358 384c5.500-1 9-4.600 10.700-9 3.500 5 9.500 7.300 17.300 6.200v-14h-28z" fill="#000"/>
</g>
<circle cx="372.200" cy="382.700" r="12.200" fill="none" stroke="#000" stroke-width="2.100"/>
<circle cx="368" cy="384.200" r="1.500" fill="#000"/><circle cx="376" cy="384.200" r="1.500" fill="#000"/>
<circle cx="384" cy="395" r="3" fill="#5cbf3f"/>
<!-- avatar 2 -->
<g clip-path="url(#av2)">
<rect x="355" y="444" width="34" height="34" fill="url(#av2bg)"/>
<g filter="url(#bl)">
<rect x="383.300" y="449" width="4" height="9" fill="#f6f8f6" opacity=".9"/>
<rect x="383.300" y="460" width="4" height="9" fill="#f6f8f6" opacity=".9"/>
<rect x="357" y="452" width="5" height="14" fill="#c6c6a8" opacity=".7"/>
<path d="M365 478l2-5.500 3.500-3.500h6.500l4.500 4 2.500 5z" fill="#e8a488"/>
<path d="M361 478l3.500-3.500 3-1-1.500 4.500z" fill="#5e6670"/>
<ellipse cx="381.700" cy="459.500" rx="1.200" ry="2.200" fill="#e89c84"/>
<path d="M364.700 457c0-7 3.300-8.800 8.300-8.800s8.300 1.800 8.300 8.800c0 7-2.800 14.800-8.300 14.800s-8.300-7.800-8.300-14.800z" fill="#de947c"/>
<path d="M364.300 457.500c-1-7 2.500-11 8.700-11 6.400 0 9.800 4 8.700 11.200-.8-4.300-2.600-6.400-8.700-6.400-5.800 0-7.700 2-8.700 6.200z" fill="#665c52"/>
<ellipse cx="367.800" cy="462.800" rx="2.300" ry="1.900" fill="#ee7c7c" opacity=".75"/>
<ellipse cx="378" cy="462.800" rx="2.300" ry="1.900" fill="#ee7c7c" opacity=".75"/>
<ellipse cx="372.800" cy="460.500" rx="1.300" ry="2.200" fill="#f4c0a8" opacity=".8"/>
<path d="M368.800 465.200q4 1.800 8 0-1 3.800-4 3.800t-4-3.800z" fill="#c24c66"/>
<path d="M370 466q2.800.8 5.600 0l-.6 1.100h-4.400z" fill="#f4ecd0"/>
<path d="M366.800 458.200h3.600M375.200 458.200h3.600" stroke="#70443c" stroke-width="1.200"/>
<path d="M367 470c1.800 2.600 3.700 3.600 6 3.600s4.400-1 6.200-3.800c-1 4.400-3.400 5.600-6.200 5.600s-5-1.300-6-5.400z" fill="#c47a62" opacity=".55"/>
</g>
</g>
<circle cx="384" cy="473" r="3" fill="#5cbf3f"/>
<!-- avatar 3 -->
<g filter="url(#bl2)">
<path d="M361.800 552.500l3.800-3.500 4-1.200h7.500l3.700 1.200 2.400 3.500v2.300h-21.400z" fill="#2c3a48"/>
<path d="M367.300 549l6 2.500 5.500-2.500 1.200 5.800h-13.500z" fill="#f2f0e4"/>
<path d="M372 551.500h2.600l1.400 3.300h-5.400z" fill="#8a8244"/>
<path d="M364.200 540c-1.200-9.500 2.600-15.200 9-15.200s9.900 5.700 8.700 15.200l-.7 3-16.300-.2z" fill="#4e4a2a"/>
<path d="M364.900 540c-.6-8 2.500-12.300 8.300-12.300s9 4.300 8.200 12.300c-.5 6.500-3.600 11-8.200 11s-7.700-4.500-8.300-11z" fill="#de9c56"/>
<path d="M365.300 543c1.300 2.800 3 4.200 4.600 4.400l3.300-.8 3.400.8c1.700-.2 3.300-1.600 4.400-4.400-.4 5.400-3.400 8.600-7.800 8.600s-7.400-3.200-7.900-8.600z" fill="#6a5e3e" opacity=".85"/>
<ellipse cx="373.200" cy="543.200" rx="2.600" ry="1.300" fill="#da807c"/>
<path d="M367 537.200h3.800M375.600 537.200h3.800" stroke="#6e7068" stroke-width="1.200"/>
<path d="M366.600 535.600h4.400M375.400 535.600h4.400" stroke="#a86634" stroke-width=".7"/>
<path d="M372.200 537.500h2l.8 3.800h-3.600z" fill="#ecb474"/>
<ellipse cx="368" cy="540.500" rx="1.800" ry="1.400" fill="#e08258" opacity=".6"/><ellipse cx="378.600" cy="540.500" rx="1.800" ry="1.400" fill="#e08258" opacity=".6"/>
</g>
<circle cx="384" cy="551" r="3" fill="#5cbf3f"/>
</svg>
<div id="hdash" class="abs"></div>
<div id="inp" class="abs">Введите сообщение...</div>

</body>
</html>
